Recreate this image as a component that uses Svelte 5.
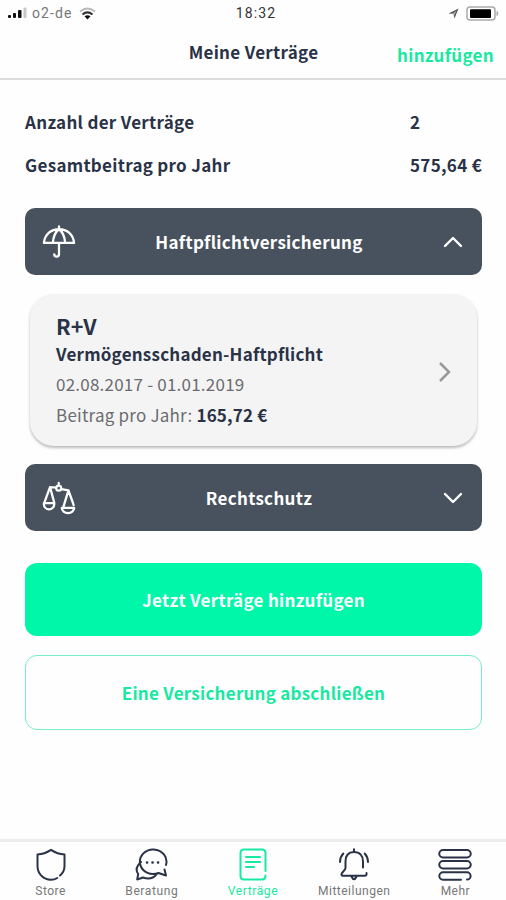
<script>
  const categories = {
    liability: { title: 'Haftpflichtversicherung', icon: 'umbrella', open: true },
    legal: { title: 'Rechtschutz', icon: 'scales', open: false }
  };
  const tabs = [
    { label: 'Store', icon: 'shield', spacing: 0.5 },
    { label: 'Beratung', icon: 'chat', spacing: 0.6 },
    { label: 'Verträge', icon: 'document', active: true, spacing: 0.6 },
    { label: 'Mitteilungen', icon: 'bell', spacing: 0.5 },
    { label: 'Mehr', icon: 'menu', spacing: 0.5 }
  ];
</script>

{#snippet category(item)}
  <button class="category">
    <svg class="category-icon" viewBox="0 0 36 36">
      {#if item.icon === 'umbrella'}
        <path d="M18 1.500v3M2 19C3 9.500 10 4.500 18 4.500S33 9.500 34 19ZM11.500 19C12 12 14.500 7 18 4.500C21.500 7 24 12 24.500 19M18 19v12a2.500 2.500 0 0 1-5 0" />
      {:else}
        <path d="M17.700 2v3M15 7L8.500 6.500L2.500 23M8.500 6.500l4.500 16.500M20.500 8.500l7.500 1.500l-5.500 18M28 10l4.500 12.500l1 3M2 23.500h11v1a5.500 5.500 0 0 1-11 0ZM34 28.500h-13a6.500 5.500 0 0 0 13 0" />
        <circle cx="17.700" cy="7.600" r="2.600" />
      {/if}
    </svg>
    <span>{item.title}</span>
    <svg class="chevron" viewBox="0 0 20 12">
      <path d={item.open ? 'M2 10l8-8 8 8' : 'M2 2l8 8 8-8'} />
    </svg>
  </button>
{/snippet}

<div class="screen">
  <div class="status">
    <div class="carrier">
      <svg width="20" height="14" viewBox="0 0 20 14">
        <rect x="0" y="9" width="3" height="3" rx="1" fill="#111" />
        <rect x="5" y="7" width="3" height="5" rx="1" fill="#111" />
        <rect x="10" y="4" width="3.500" height="8" rx="1" fill="#111" />
        <rect x="15.500" y="1.500" width="3" height="10.500" rx="1" fill="#c8c8c8" />
      </svg>
      <span>o2-de</span>
      <svg width="17" height="13" viewBox="0 0 17 13" fill="none">
        <path d="M1 4.500Q8.500-1.500 16 4.500" stroke="#bbb" stroke-width="1.800" />
        <path d="M3.500 7.500Q8.500 3.200 13.500 7.500" stroke="#333" stroke-width="2" />
        <path d="M5.500 9.300Q8.500 7 11.500 9.300L8.500 12.500Z" fill="#111" />
      </svg>
    </div>
    <span class="clock">18:32</span>
    <div class="power">
      <svg width="11" height="11" viewBox="0 0 11 11">
        <path d="M.5 5.500L10.500.5L6.500 10.500L5.500 5.800Z" fill="#555" />
        <path d="M5 5.500L8.500 2.500L6.300 7Z" fill="#bbb" />
      </svg>
      <svg width="34" height="15" viewBox="0 0 34 15">
        <rect x="1" y="1" width="28" height="13" rx="3" fill="#fff" stroke="#aaa" stroke-width="1.500" />
        <rect x="4" y="3.200" width="21" height="8.800" rx="1" fill="#000" />
        <path d="M31 5.500q2 2 0 4Z" fill="#aaa" stroke="#aaa" />
      </svg>
    </div>
  </div>

  <header>
    <h1>Meine Verträge</h1>
    <button class="add">hinzufügen</button>
  </header>

  <main>
    <dl>
      <div><dt>Anzahl der Verträge</dt><dd>2</dd></div>
      <div><dt>Gesamtbeitrag pro Jahr</dt><dd>575,64 €</dd></div>
    </dl>

    {@render category(categories.liability)}

    <article>
      <div>
        <h2>R+V</h2>
        <h3>Vermögensschaden-Haftpflicht</h3>
        <p>02.08.2017 - 01.01.2019</p>
        <p>Beitrag pro Jahr: <b>165,72 €</b></p>
      </div>
      <svg width="14" height="22" viewBox="0 0 14 22"><path d="M2 2l9 9-9 9" /></svg>
    </article>

    {@render category(categories.legal)}

    <button class="primary">Jetzt Verträge hinzufügen</button>
    <button class="secondary">Eine Versicherung abschließen</button>
  </main>

  <nav>
    {#each tabs as tab}
      <a class:active={tab.active} style:letter-spacing="{tab.spacing}px">
        <svg width="34" height="34" viewBox="0 0 34 34">
          {#if tab.icon === 'shield'}
            <path d="M26 27.500C29 25 30.500 22 30.500 18V6.500Q23.500 6 17 1.800Q10.500 6 3.500 6.500V18C3.500 25.500 9 31.500 17 31.800Q20.500 31.700 23.300 30" />
          {:else if tab.icon === 'chat'}
            <path d="M31 17A13.300 12.300 0 1 0 23.500 25L31 27.500L29.500 21.500M6 14C1 18.500 1 23 3.200 26L2.200 31.500L8 29.500C14 31.500 19 29.500 21.500 26.300" />
            <path d="M12 14.500h.1M17.500 14.500h.1M23 14.500h.1" stroke-width="2.600" />
          {:else if tab.icon === 'document'}
            <path d="M29.500 23V5Q29.500 1.500 26 1.500H8Q4.500 1.500 4.500 5V28Q4.500 31.500 8 31.500H26Q29.500 31.500 29.500 27.500M10 9h14M10 14h14M10 19h8" />
          {:else if tab.icon === 'bell'}
            <path d="M17 1.200v2.500M26 19.500V13.500C26 7.500 22.500 4 17 4S8.500 7.500 8.500 13.500V20C8.500 22.500 4.500 24 4.500 26.500Q4.500 27.800 6.500 27.800H27.500Q30 27.800 29.500 25M14.500 28.500Q17 34 19.500 28.500M6.300 5.500Q3 9 3 14M27.700 5.500Q31 9 31 14" />
          {:else}
            <path d="M5 2h24a3 3 0 0 1 0 7.500H5A3 3 0 0 1 5 2ZM5 13h24a3 3 0 0 1 0 7.500H5A3 3 0 0 1 5 13ZM23 31.700H5a3 3 0 0 1 0-7.400h24a3 3 0 0 1 0 7.200" />
          {/if}
        </svg>
        <span>{tab.label}</span>
      </a>
    {/each}
  </nav>
</div>

<style>
  :global(body) { background: #fefefe; }
  .screen {
    width: 506px;
    height: 900px;
    display: flex;
    flex-direction: column;
    font-family: 'Noto Sans CJK SC', 'Open Sans', sans-serif;
    letter-spacing: 0.3px;
    color: #293247;
    background: #fefefe;
    overflow: hidden;
  }
  h1, h2, h3, p, dl, dd { margin: 0; }
  button {
    font: inherit;
    letter-spacing: inherit;
    color: inherit;
    border: 0;
    padding: 0;
    background: none;
  }
  svg { display: block; flex: none; }
  .status {
    height: 26px;
    display: grid;
    grid-template-columns: 1fr auto 1fr;
    align-items: center;
    padding: 0 6px 0 8px;
    box-sizing: border-box;
    font: 14px/26px Roboto, sans-serif;
  }
  .carrier { display: flex; align-items: center; gap: 4px; color: #777; letter-spacing: 1.1px; }
  .carrier svg:last-child { margin-left: 2px; }
  .clock { color: #333; letter-spacing: 1.1px; padding-left: 4px; }
  .power { display: flex; justify-content: flex-end; align-items: center; gap: 7px; }
  header {
    height: 54px;
    box-sizing: border-box;
    border-bottom: 2px solid #dcdcde;
    display: grid;
    grid-template-columns: 1fr auto 1fr;
    align-items: start;
    font-weight: 700;
  }
  h1 { grid-column: 2; font-size: 17px; line-height: 51px; padding-left: 1px; }
  .add {
    font-size: 17px;
    font-weight: 700;
    line-height: 57px;
    height: 52px;
    display: flex;
    justify-self: end;
    padding-right: 12px;
    color: #17e9a1;
  }
  main { padding: 20px 24px 0 25px; flex: 1; display: flex; flex-direction: column; }
  dl { font-size: 17px; font-weight: 700; margin-bottom: 22px; }
  dl div { display: flex; justify-content: space-between; line-height: 43px; height: 43px; }
  dd { width: 72px; white-space: nowrap; }
  .category {
    height: 67px;
    border-radius: 10px;
    background: #48525e;
    color: #fff;
    display: grid;
    grid-template-columns: 54px 1fr 54px;
    align-items: center;
    font-size: 17px;
    font-weight: 700;
    flex: none;
  }
  .category span { padding: 0 0 1px 11px; }
  .category-icon { width: 34px; height: 34px; margin-left: 17px; }
  .category svg { fill: none; stroke: #fff; stroke-width: 2.400; stroke-linecap: round; stroke-linejoin: round; }
  .chevron { width: 20px; height: 12px; margin-left: 15px; }
  article {
    flex: none;
    height: 152px;
    margin: 19px 5px 18px;
    box-sizing: border-box;
    padding: 17px 25px 0 26px;
    border-radius: 24px;
    background: #f4f4f4;
    box-shadow: 0 2px 3px #0004;
    display: flex;
    justify-content: space-between;
  }
  article svg { margin-top: 50px; fill: none; stroke: #999; stroke-width: 2.500; }
  h2 { font-size: 21.500px; line-height: 30px; letter-spacing: 0; }
  h3 { font-size: 17px; line-height: 26px; margin-bottom: 2px; letter-spacing: 0.22px; }
  p { font-size: 17px; line-height: 30px; font-weight: 400; color: #6b6b70; letter-spacing: 0.22px; }
  p + p { padding-top: 1px; }
  b { font-weight: 700; color: #293247; letter-spacing: 0.2px; }
  .primary, .secondary { height: 73px; border-radius: 12px; font-size: 17px; font-weight: 700; flex: none; }
  .primary { margin-top: 32px; background: #00f7aa; color: #fff; }
  .secondary { margin-top: 19px; height: 75px; border: 1.500px solid #78edc5; color: #17e9a1; letter-spacing: 0.25px; }
  nav {
    flex: none;
    height: 61px;
    box-sizing: border-box;
    border-top: 3px solid #ededed;
    display: grid;
    grid-template-columns: repeat(5, 1fr);
    font: 12px/14px Roboto, sans-serif;
    color: #777;
  }
  nav a { display: flex; flex-direction: column; align-items: center; padding-top: 6px; }
  nav a span { margin-top: 2px; }
  nav svg { fill: none; stroke: #293247; stroke-width: 2; stroke-linecap: round; stroke-linejoin: round; }
  nav .active { color: #17e9a1; }
  nav .active svg { stroke: #17e9a1; }
</style>
